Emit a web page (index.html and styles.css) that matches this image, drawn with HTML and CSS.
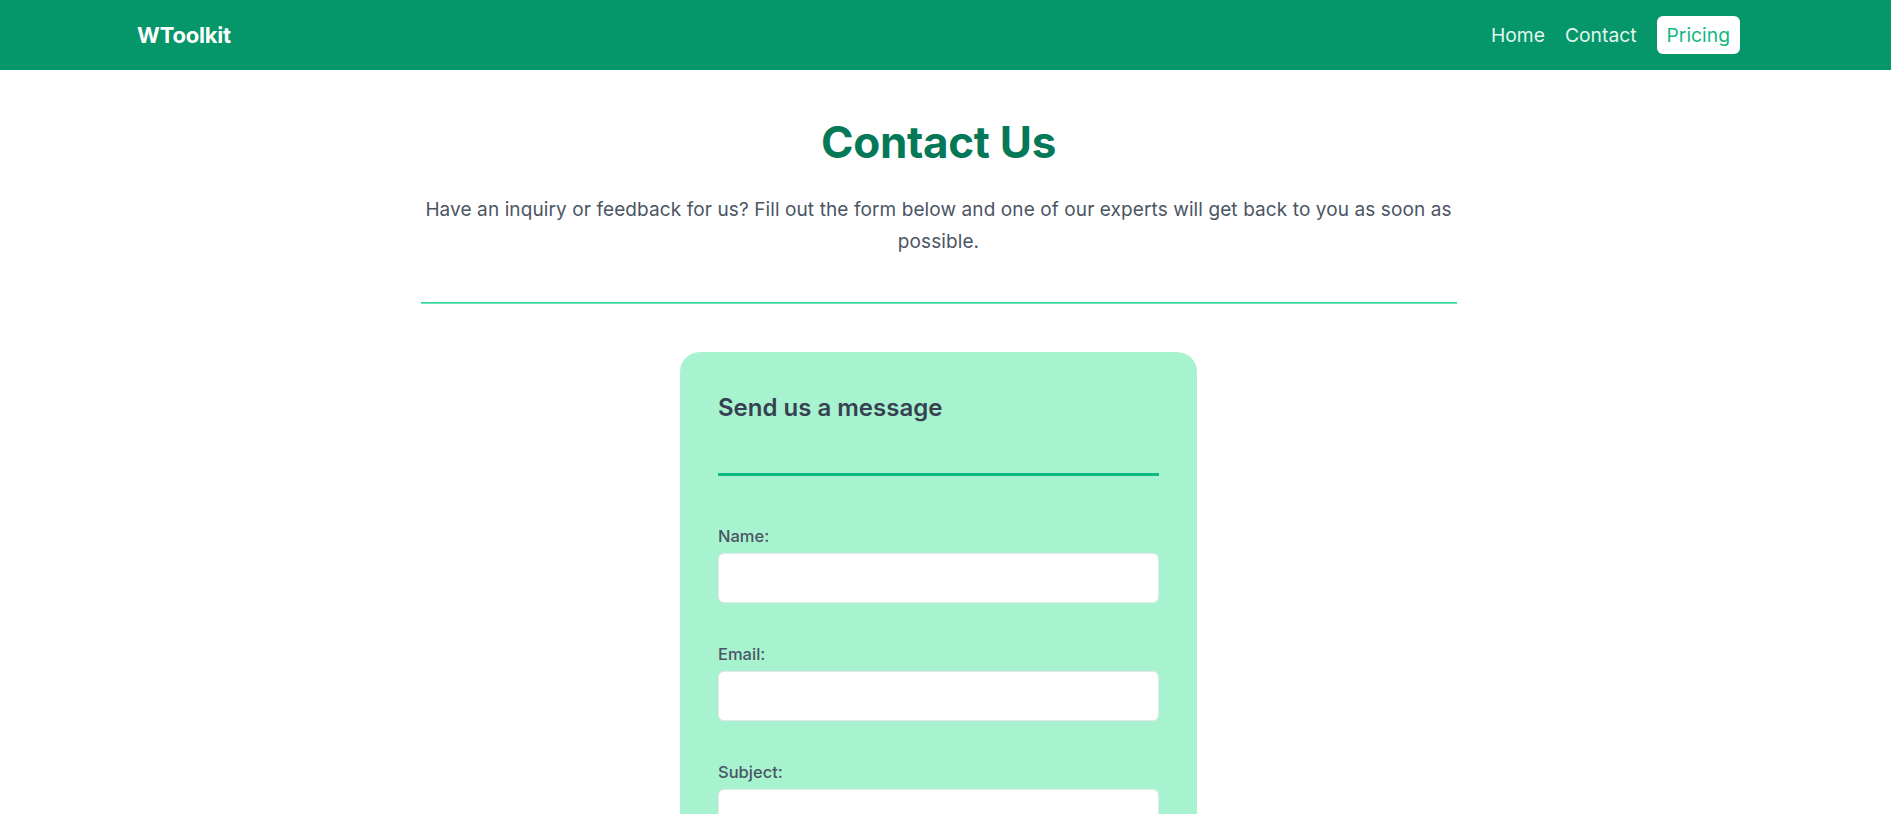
FILE: index.html
```html
<!DOCTYPE html>
<html lang="en">
<head>
<meta charset="utf-8">
<title>Contact Us - WToolkit</title>
<link rel="stylesheet" href="styles.css">
</head>
<body>
<header class="navbar">
  <div class="nav-inner">
    <a class="brand" href="#">WToolkit</a>
    <nav class="nav-links">
      <a class="nav-link" href="#">Home</a>
      <a class="nav-link" href="#">Contact</a>
      <a class="nav-link nav-btn" href="#">Pricing</a>
    </nav>
  </div>
</header>
<main class="main">
  <section class="intro">
    <h1 class="title">Contact Us</h1>
    <p class="lead">Have an inquiry or feedback for us? Fill out the form below and one of our experts will get back to you as soon as possible.</p>
    <div class="divider"></div>
  </section>
  <section class="card">
    <h2 class="card-title">Send us a message</h2>
    <div class="card-rule"></div>
    <form class="form">
      <div class="field">
        <label class="label" for="name">Name:</label>
        <input class="input" id="name" type="text">
      </div>
      <div class="field">
        <label class="label" for="email">Email:</label>
        <input class="input" id="email" type="email">
      </div>
      <div class="field">
        <label class="label" for="subject">Subject:</label>
        <input class="input" id="subject" type="text">
      </div>
    </form>
  </section>
</main>
</body>
</html>
```

FILE: styles.css
```css
* { box-sizing: border-box; }

html, body {
  margin: 0;
  padding: 0;
}

body {
  font-family: Inter, "Noto Sans", "Liberation Sans", sans-serif;
  background: #ffffff;
  color: #374151;
}

.navbar {
  background: #059669;
  height: 70px;
}

.nav-inner {
  height: 100%;
  padding: 0 151px 0 137px;
  display: flex;
  align-items: center;
  justify-content: space-between;
}

.brand {
  color: #ffffff;
  font-weight: 700;
  font-size: 22px;
  text-decoration: none;
  letter-spacing: -0.2px;
}

.nav-links {
  display: flex;
  align-items: center;
  gap: 20px;
}

.nav-link {
  color: #e2f8ee;
  font-size: 19.3px;
  text-decoration: none;
}

.nav-btn {
  background: #ffffff;
  color: #10b981;
  border-radius: 6px;
  height: 38px;
  padding: 0 10px;
  display: flex;
  align-items: center;
}

.main {
  padding: 46px 14px 60px 0;
}

.intro {
  width: 1036px;
  margin: 0 auto;
  text-align: center;
}

.title {
  margin: 0;
  font-size: 44px;
  line-height: 53px;
  font-weight: 700;
  color: #047857;
  letter-spacing: -0.3px;
}

.lead {
  margin: 25px 0 0;
  font-size: 19px;
  line-height: 32px;
  letter-spacing: 0.1px;
  color: #4b5563;
  padding: 0 4px;
}

.divider {
  margin-top: 44px;
  height: 2px;
  background: #6ee7b7;
  border-top: 1px solid #34d399;
}

.card {
  width: 517px;
  margin: 48px auto 0;
  background: #a7f3d0;
  border-radius: 20px;
  padding: 40px 38px 40px;
}

.card-title {
  margin: 0;
  font-size: 24px;
  line-height: 32px;
  font-weight: 600;
  color: #374151;
}

.card-rule {
  margin-top: 49px;
  height: 3px;
  background: #10b981;
}

.form {
  display: flex;
  flex-direction: column;
  gap: 39px;
  margin-top: 48px;
}

.field {
  display: flex;
  flex-direction: column;
  gap: 5px;
}

.label {
  font-size: 16.5px;
  line-height: 24px;
  font-weight: 500;
  color: #4b5563;
}

.input {
  height: 50px;
  width: 100%;
  background: #ffffff;
  border: 1px solid #e5e7eb;
  border-radius: 6px;
  font-family: inherit;
  font-size: 16px;
  padding: 0 12px;
}
```
